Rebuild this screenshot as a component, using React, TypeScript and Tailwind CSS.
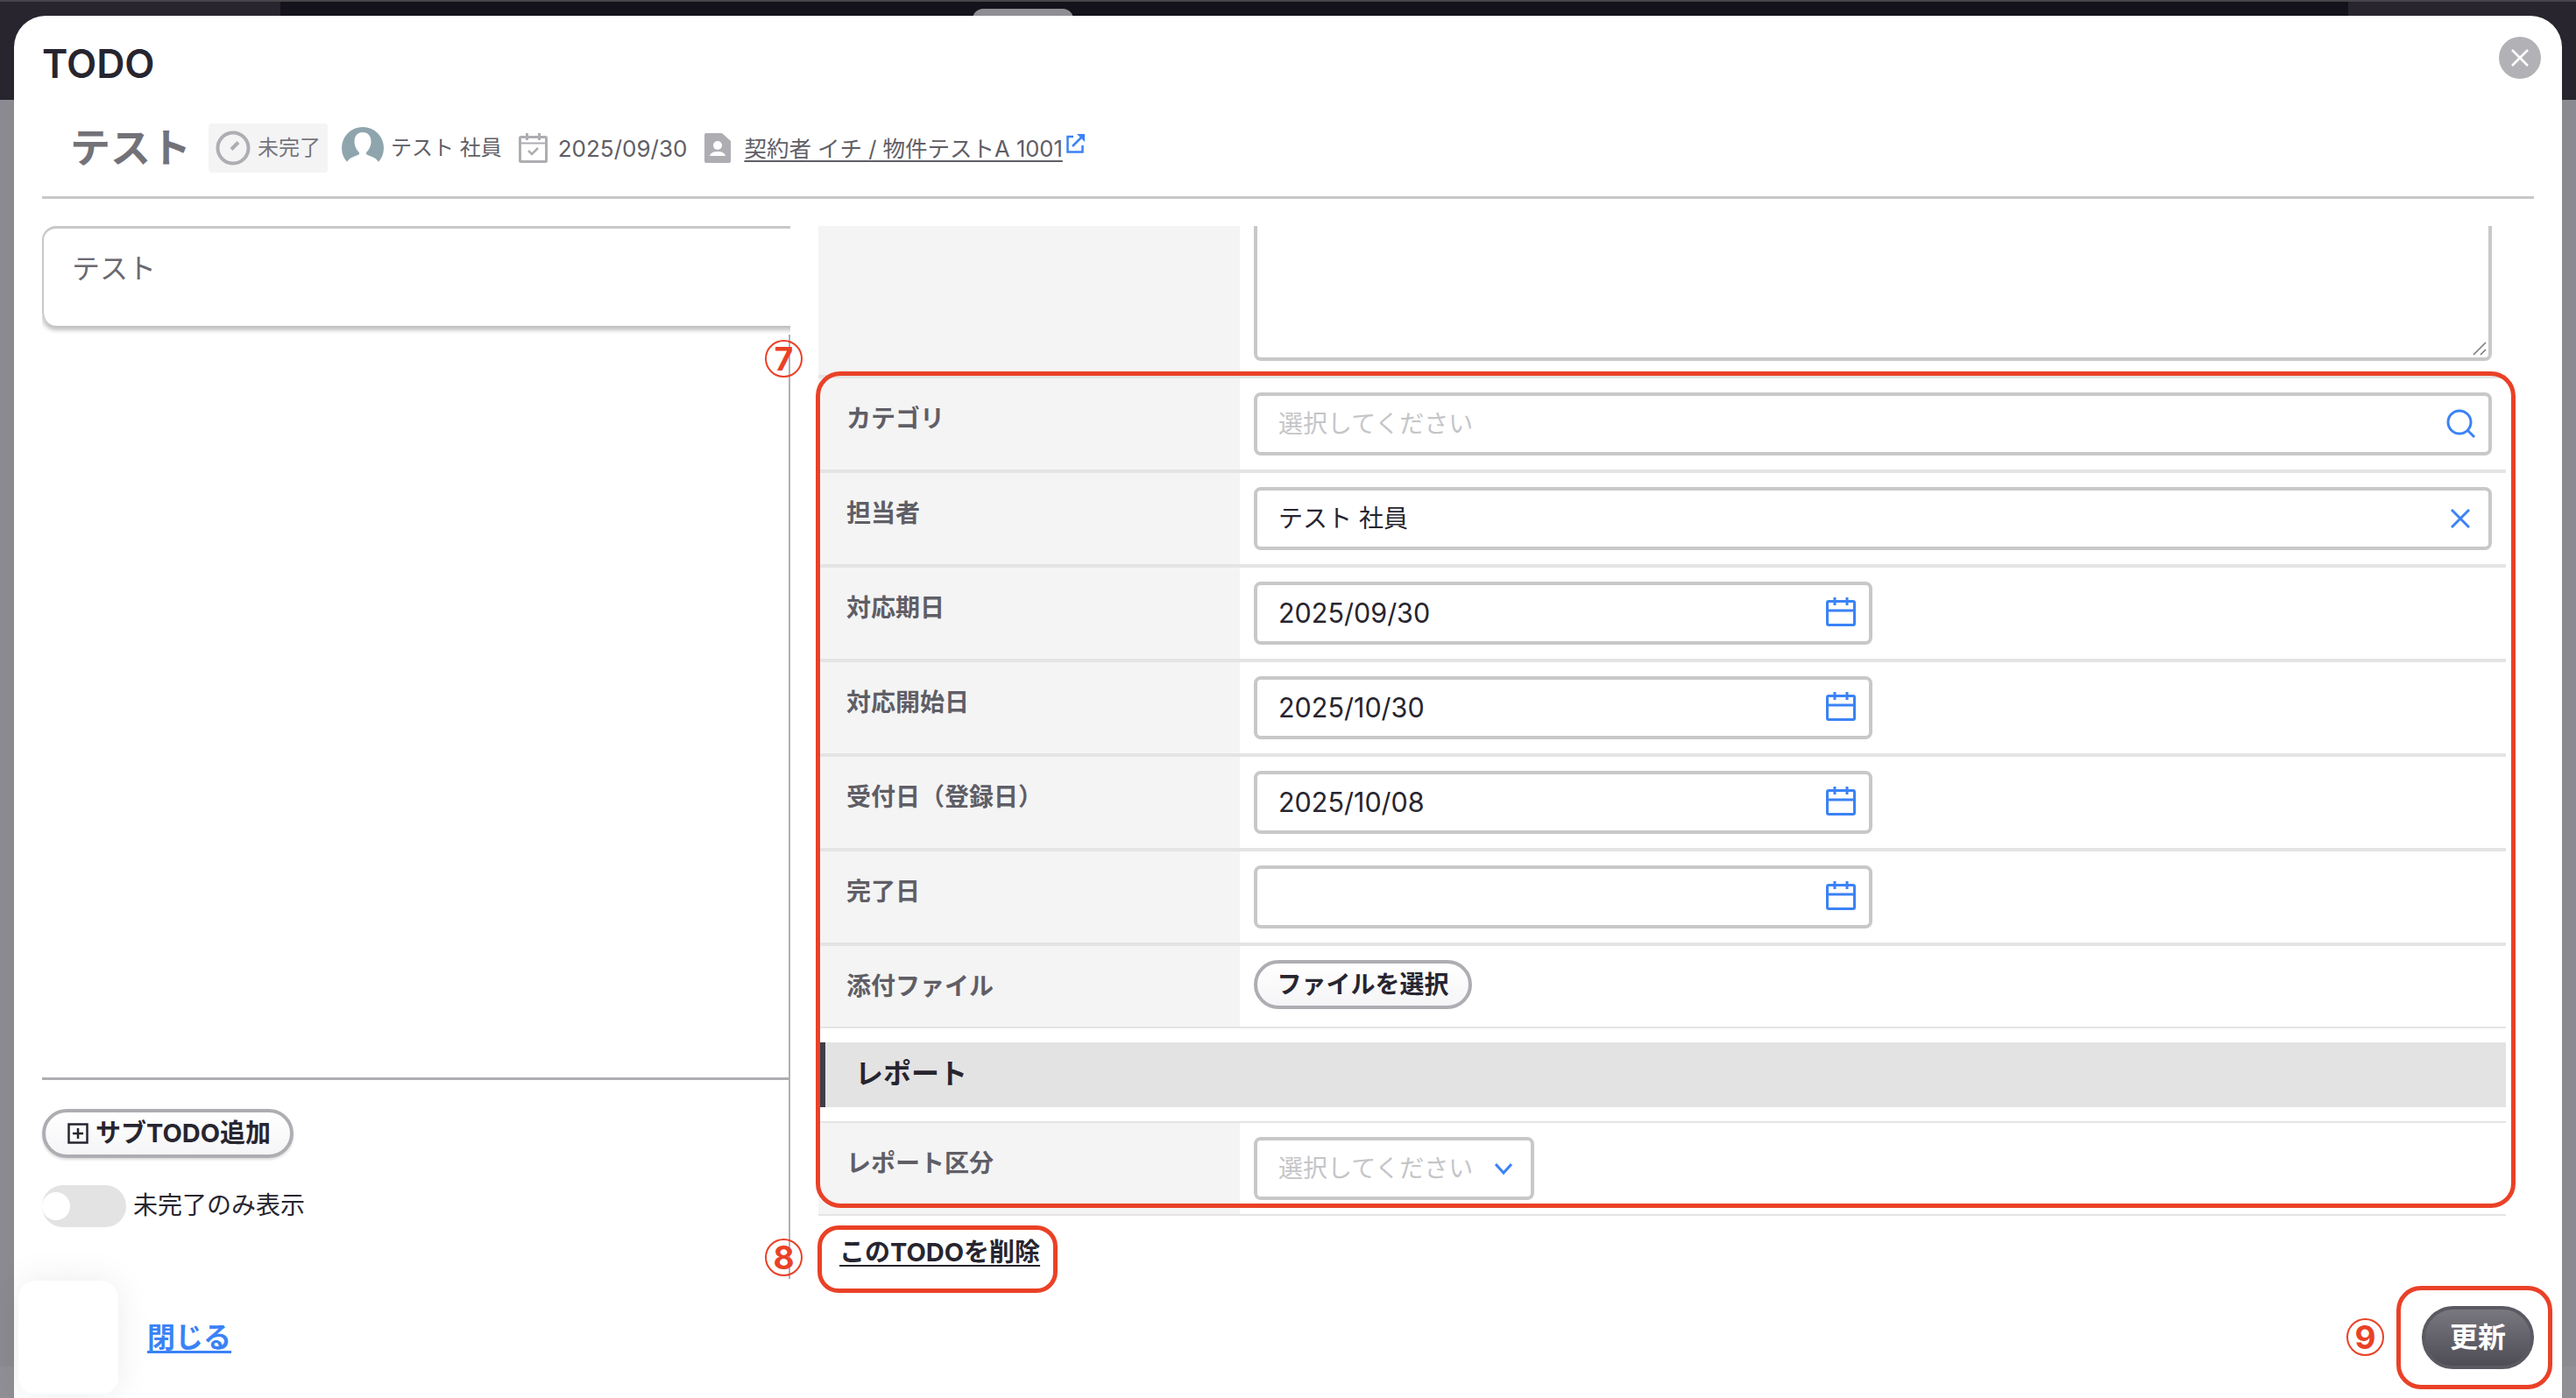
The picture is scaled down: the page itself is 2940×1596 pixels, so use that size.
import React from 'react';

const ink = 'text-[#27252f]';

const CalendarIcon = () => (
  <svg width="36" height="36" viewBox="0 0 36 36" fill="none" stroke="#3b82f6" strokeWidth="3">
    <rect x="2.5" y="5.5" width="31" height="27" rx="1.5" />
    <path d="M2 16h32M11 1v9M25 1v9" />
  </svg>
);

const ClockIcon = () => (
  <svg width="40" height="40" viewBox="0 0 40 40" fill="none" stroke="#aeadb2">
    <circle cx="20" cy="20" r="17.5" strokeWidth="4" />
    <path d="M18 21.5l8-8" strokeWidth="4" />
  </svg>
);

const AvatarIcon = () => (
  <svg width="48" height="48" viewBox="0 0 48 48">
    <circle cx="24" cy="24" r="24" fill="#8fa5ad" />
    <path d="M24 6c6 0 9.5 4.5 9.5 10.5 0 6-3.5 11-5.5 12.5v2c2 2 12 3 14.5 10a24 24 0 0 1-37 0c2.500-7 12.500-8 14.500-10v-2c-2-1.500-5.500-6.500-5.500-12.500C14.500 10.500 18 6 24 6z" fill="#fff" />
  </svg>
);

const SmallCalendar = () => (
  <svg width="33" height="34" viewBox="0 0 33 34" fill="none" stroke="#aeadb2">
    <rect x="1.500" y="4.500" width="30" height="28" rx="1" strokeWidth="3" />
    <path d="M2 11.500h29" strokeWidth="2" />
    <path d="M9.500 0v8M23.500 0v8" strokeWidth="3" />
    <path d="M11 20l4 4 7-7" strokeWidth="2.500" />
  </svg>
);

const DocIcon = () => (
  <svg width="30" height="34" viewBox="0 0 30 34">
    <path d="M2 0h18l10 9v23a2 2 0 0 1-2 2H2a2 2 0 0 1-2-2V2a2 2 0 0 1 2-2z" fill="#aeadb2" />
    <circle cx="15" cy="14" r="5" fill="#fff" />
    <path d="M6 26c1-4 5-5 9-5s8 1 9 5z" fill="#fff" />
  </svg>
);

const ExternalIcon = () => (
  <svg width="22" height="23" viewBox="0 0 22 23" fill="none" stroke="#3b82f6" strokeWidth="2.500">
    <path d="M8 4H1.500v17.500h17V14" />
    <path d="M7 15L19 3" />
    <path d="M12 1h9v9z" fill="#3b82f6" stroke="none" />
  </svg>
);

const PlusBox = () => (
  <svg width="24" height="24" viewBox="0 0 24 24" fill="none" stroke="#27252f" strokeWidth="2.500">
    <rect x="1.500" y="1.500" width="21" height="21" />
    <path d="M12 6v12M6 12h12" />
  </svg>
);

const Field = ({ w, children, icon }: { w?: string; children?: React.ReactNode; icon: React.ReactNode }) => (
  <div className={`flex h-[72px] items-center justify-between rounded-lg border-4 border-[#c8c8c8] bg-white pl-[24px] ${w ?? 'w-full'}`}>
    <span className={`text-[28px] leading-[40px] ${ink}`}>{children}</span>
    {icon}
  </div>
);

const Row = ({ label, h = 'h-[108px]', top = 'pt-[26px]', children }: { label: string; h?: string; top?: string; children: React.ReactNode }) => (
  <div className={`flex border-t-4 border-[#e4e4e4] ${h}`}>
    <div className={`w-[481px] shrink-0 bg-[#f4f4f4] pl-[32px] text-[28px] leading-[40px] font-bold text-[#5f5e66] ${top}`}>{label}</div>
    <div className="flex-1 px-[16px] pt-[16px]">{children}</div>
  </div>
);

const DateField = ({ value }: { value?: string }) => (
  <Field
    w="w-[706px]"
    icon={
      <span className="mr-[14px] mb-[3px]">
        <CalendarIcon />
      </span>
    }
  >
    <span className="text-[30.500px]">{value}</span>
  </Field>
);

const Circled = ({ n, x, y }: { n: string; x: string; y: string }) => (
  <span className={`absolute flex h-[43px] w-[43px] items-center justify-center rounded-full border-2 border-[#ea4127] bg-transparent text-[37px] leading-none font-bold text-[#ea4127] ${x} ${y}`}>
    {n}
  </span>
);

export default function App() {
  return (
    <div className="relative h-[1596px] w-[2940px] overflow-hidden bg-[linear-gradient(#8b8a90_1560px,#908f95_1560px)] font-['Inter','Noto_Sans_CJK_JP',sans-serif]">
      {/* page behind the modal */}
      <div className="absolute top-0 left-0 flex h-[114px] w-full border-t-2 border-[#46454a]">
        <div className="w-[320px] bg-[#28252f]" />
        <div className="relative flex-1 bg-[#14121a]">
          <div className="absolute top-[8px] left-[790px] h-[12px] w-[115px] rounded-t-xl bg-[#8f8e94]" />
        </div>
        <div className="w-[260px] bg-[#28252f]" />
      </div>

      <div className="relative px-[16px] pt-[18px]">
        <div className="relative flex h-[1578px] flex-col rounded-t-[36px] bg-white">
          <button className="absolute top-[24px] right-[24px] flex h-[48px] w-[48px] items-center justify-center rounded-full bg-[#b2b1b5]">
            <svg width="20" height="20" viewBox="0 0 20 20" stroke="#fff" strokeWidth="2.600">
              <path d="M1 1l18 18M19 1L1 19" />
            </svg>
          </button>

          <div className="px-[32px]">
            <h1 className={`pt-[27px] text-[44.500px] leading-[56px] font-semibold ${ink}`}>TODO</h1>

            <div className="mt-[40px] flex h-[56px] items-center pl-[32px]">
              <span className="-mt-[2px] w-[158px] text-[46px] leading-[56px] font-bold text-[#737278]">テスト</span>
              <span className="flex h-[56px] w-[136px] items-center gap-[8px] rounded bg-[#f4f4f5] pl-[8px] text-[24px] text-[#77767c]">
                <ClockIcon />
                <span>未完了</span>
              </span>
              <span className="ml-[16px]">
                <AvatarIcon />
              </span>
              <span className="ml-[8px] text-[24px] text-[#5f5e66]">テスト 社員</span>
              <span className="ml-[19px]">
                <SmallCalendar />
              </span>
              <span className="ml-[12px] text-[26px] text-[#5f5e66]">2025/09/30</span>
              <span className="ml-[20px]">
                <DocIcon />
              </span>
              <a className="mt-[2px] ml-[15px] text-[25.500px] text-[#5f5e66] underline underline-offset-4">契約者 イチ / 物件テストA 1001</a>
              <span className="mb-[12px] ml-[4px]">
                <ExternalIcon />
              </span>
            </div>

            <div className="mt-[27px] h-[3px] bg-[#c8c8c9]" />

            <div className="mt-[31px] flex h-[1202px] items-start">
              {/* left column */}
              <div className="flex h-full w-[854px] shrink-0 flex-col">
                <div className="h-[124px] shrink-0 overflow-hidden">
                  <div className="h-[114px] w-[920px] rounded-l-2xl border-t-[3px] border-l-2 border-[#c8c8c8] pt-[26px] pl-[32px] text-[32px] leading-[40px] text-[#6a696f] shadow-[0_5px_5px_rgba(0,0,0,0.25)]">
                    テスト
                  </div>
                </div>
                <div className="flex flex-1 flex-col border-r-2 border-[#b0b0b4]">
                  <div className="h-[851px] border-b-[3px] border-[#aeadb2]" />
                  <button className={`mt-[33px] flex h-[56px] w-[287px] items-center rounded-full border-4 border-[#aeadb2] bg-gradient-to-b from-white to-[#f5f5f7] pl-[25px] text-[29px] font-bold ${ink} shadow-[0_2px_3px_rgba(0,0,0,0.15)]`}>
                    <PlusBox />
                    <span className="ml-[8px]">サブTODO追加</span>
                  </button>
                  <div className="mt-[31px] flex items-center">
                    <span className="flex h-[48px] w-[96px] items-center rounded-full bg-[#e3e3e3]">
                      <span className="h-[32px] w-[32px] rounded-full bg-white" />
                    </span>
                    <span className={`-mt-[2px] ml-[8px] text-[28px] ${ink}`}>未完了のみ表示</span>
                  </div>
                </div>
              </div>

              {/* right column */}
              <div className="ml-[32px] w-[1926px]">
                <div className="flex h-[170px]">
                  <div className="w-[481px] shrink-0 bg-[#f4f4f4]" />
                  <div className="flex-1 px-[16px]">
                    <div className="relative h-[154px] rounded-b-lg border-x-4 border-b-4 border-[#c8c8c8]">
                      <svg className="absolute right-[2px] bottom-[2px]" width="16" height="16" viewBox="0 0 16 16" stroke="#77767c" strokeWidth="1.500">
                        <path d="M1 15L15 1M9 15l6-6" />
                      </svg>
                    </div>
                  </div>
                </div>

                <Row label="カテゴリ">
                  <Field
                    icon={
                      <svg className="mr-[14px]" width="34" height="34" viewBox="0 0 34 34" fill="none" stroke="#3b82f6" strokeWidth="3">
                        <circle cx="15" cy="15" r="13" />
                        <path d="M24 24l8 8" />
                      </svg>
                    }
                  >
                    <span className="text-[#c5c5c8]">選択してください</span>
                  </Field>
                </Row>
                <Row label="担当者">
                  <Field
                    icon={
                      <svg className="mr-[21px]" width="22" height="22" viewBox="0 0 22 22" stroke="#3b82f6" strokeWidth="3">
                        <path d="M1 1l20 20M21 1L1 21" />
                      </svg>
                    }
                  >
                    テスト 社員
                  </Field>
                </Row>
                <Row label="対応期日">
                  <DateField value="2025/09/30" />
                </Row>
                <Row label="対応開始日">
                  <DateField value="2025/10/30" />
                </Row>
                <Row label="受付日（登録日）">
                  <DateField value="2025/10/08" />
                </Row>
                <Row label="完了日">
                  <DateField />
                </Row>
                <Row label="添付ファイル" h="h-[96px]" top="pt-[26px]">
                  <button className={`flex h-[56px] w-[249px] items-center justify-center rounded-full border-4 border-[#aeadb2] bg-gradient-to-b from-white to-[#f5f5f7] text-[28px] font-bold ${ink}`}>
                    ファイルを選択
                  </button>
                </Row>

                <div className="border-t-2 border-[#e4e4e4] pt-[16px]">
                  <div className={`flex h-[74px] items-center border-l-8 border-[#3f3e48] bg-[#e3e3e3] pb-[2px] pl-[34px] text-[32px] font-bold ${ink}`}>
                    レポート
                  </div>
                </div>

                <div className="mt-[16px] flex h-[108px] border-y-2 border-[#e4e4e4]">
                  <div className="w-[481px] shrink-0 bg-[#f4f4f4] pt-[26px] pl-[32px] text-[28px] leading-[40px] font-bold text-[#5f5e66]">レポート区分</div>
                  <div className="flex-1 px-[16px] pt-[16px]">
                    <Field
                      w="w-[320px]"
                      icon={
                        <svg className="mr-[21px]" width="20" height="14" viewBox="0 0 20 14" fill="none" stroke="#3b82f6" strokeWidth="3">
                          <path d="M1 2l9 10 9-10" />
                        </svg>
                      }
                    >
                      <span className="text-[#c5c5c8]">選択してください</span>
                    </Field>
                  </div>
                </div>

                <div className="mt-[22px] pl-[24px]">
                  <a className={`text-[29px] leading-[40px] font-bold ${ink} underline underline-offset-4`}>このTODOを削除</a>
                </div>
              </div>
            </div>
          </div>

          {/* footer */}
          <div className="mt-[2px] flex items-center justify-between pr-[32px] pl-[5px]">
            <div className="flex items-center">
              <div className="h-[130px] w-[114px] rounded-[20px] bg-white shadow-[0_0_40px_rgba(0,0,0,0.08)]" />
              <a className="ml-[33px] text-[32px] font-bold text-[#3b82f6] underline underline-offset-4">閉じる</a>
            </div>
            <button className="flex h-[72px] w-[128px] items-center justify-center rounded-full border-4 border-[#5b5a62] bg-gradient-to-b from-[#7a787f] to-[#4e4c55] text-[32px] font-bold text-white">
              更新
            </button>
          </div>
        </div>
      </div>

      {/* red annotations */}
      <div className="absolute top-[424px] left-[931px] h-[955px] w-[1940px] rounded-[28px] border-[5px] border-[#ea4127]" />
      <div className="absolute top-[1399px] left-[933px] h-[77px] w-[274px] rounded-[24px] border-[5px] border-[#ea4127]" />
      <div className="absolute top-[1468px] left-[2735px] h-[118px] w-[178px] rounded-[28px] border-[5px] border-[#ea4127]" />
      <Circled n="7" x="left-[873px]" y="top-[388px]" />
      <Circled n="8" x="left-[873px]" y="top-[1414px]" />
      <Circled n="9" x="left-[2678px]" y="top-[1505px]" />
    </div>
  );
}
